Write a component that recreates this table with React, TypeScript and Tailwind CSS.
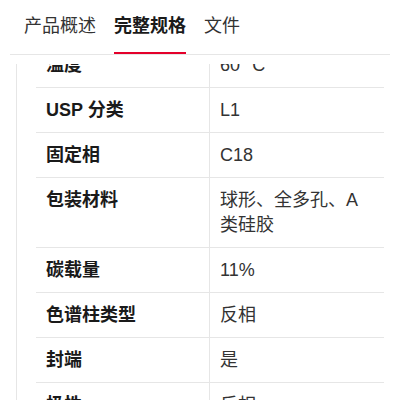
const TABS = [
  { label: "产品概述", active: false },
  { label: "完整规格", active: true },
  { label: "文件", active: false },
];

const SPECS: [string, string][] = [
  ["温度", "60 °C"],
  ["USP 分类", "L1"],
  ["固定相", "C18"],
  ["包装材料", "球形、全多孔、A类硅胶"],
  ["碳载量", "11%"],
  ["色谱柱类型", "反相"],
  ["封端", "是"],
  ["极性", "反相"],
];

export default function App() {
  return (
    <div
      className="w-[400px] h-[400px] overflow-hidden bg-white"
      style={{ fontFamily: '"Liberation Sans", "Noto Sans CJK SC", sans-serif' }}
    >
      {/* Tabs */}
      <div className="mx-[10px] h-[55px] border-b border-[#e6e6e6] flex gap-[18px] pl-[14px]">
        {TABS.map((tab) => (
          <div key={tab.label} className="flex flex-col h-full">
            <span
              className={
                tab.active
                  ? "pt-[13px] text-[18px] leading-[26px] font-bold text-[#1a1a1a]"
                  : "pt-[13px] text-[18px] leading-[26px] text-[#333]"
              }
            >
              {tab.label}
            </span>
            {tab.active && <div className="mt-auto h-[2px] bg-[#e4002b]" />}
          </div>
        ))}
      </div>

      {/* Spec table */}
      <div className="pt-[9px]">
        <div className="h-[336px] overflow-hidden ml-[16px] border-l border-[#e6e6e6]">
          <div className="mt-[-21px] ml-[19px] w-[348px]">
            {SPECS.map(([name, value]) => (
              <div key={name} className="grid grid-cols-[173px_175px] border-b border-[#e6e6e6] text-[18px] leading-[25px]">
                <div className="pl-[10px] pt-[10px] pb-[9px] font-bold text-[#1a1a1a]">{name}</div>
                <div className="pl-[10px] pr-[11px] pt-[10px] pb-[9px] border-l border-[#e6e6e6] text-[#333]">
                  {value}
                </div>
              </div>
            ))}
          </div>
        </div>
      </div>
    </div>
  );
}
